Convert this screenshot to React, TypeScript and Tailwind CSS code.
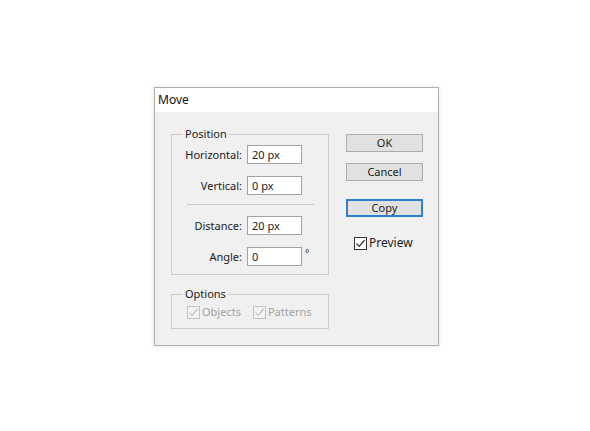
import React from "react";

const font = { fontFamily: '"Noto Sans", "Liberation Sans", sans-serif' };

function Field({ label, value, suffix }: { label: string; value: string; suffix?: string }) {
  return (
    <div className="flex items-center h-[19px]">
      <span className="w-[70px] text-right text-[11px] leading-[19px] text-[#1b1b1b]">{label}</span>
      <input
        readOnly
        value={value}
        className="ml-[5px] w-[55px] h-[19px] border border-[#a3a3a3] bg-white px-[4px] text-[11px] text-[#222] outline-none"
      />
      {suffix && <span className="ml-[3px] self-start text-[10px] leading-[12px] text-[#333]">{suffix}</span>}
    </div>
  );
}

function Check({ on, disabled }: { on: boolean; disabled?: boolean }) {
  const c = disabled ? "#c2c2c2" : "#333333";
  return (
    <svg width="13" height="13" viewBox="0 0 13 13" className="shrink-0">
      <rect x="0.5" y="0.5" width="12" height="12" fill={disabled ? "#f4f4f4" : "#ffffff"} stroke={c} />
      {on && <path d="M2.5 6.5 L5.2 9.3 L10.6 3" fill="none" stroke={c} strokeWidth="1.2" />}
    </svg>
  );
}

function Btn({ children, focused }: { children: React.ReactNode; focused?: boolean }) {
  return (
    <div
      className={
        "w-[77px] h-[18px] flex items-center justify-center bg-[#e1e1e1] text-[11px] text-[#1b1b1b] " +
        (focused ? "border-2 border-[#2f7fd0]" : "border border-[#adadad]")
      }
    >
      {children}
    </div>
  );
}

export default function App() {
  return (
    <div className="min-h-[431px] w-[590px] bg-white pt-[87px] pl-[154px]" style={font}>
      <div className="w-[285px] h-[259px] border border-[#b3aca6] bg-[#f0f0f0] shadow-[0_0_5px_rgba(0,0,0,0.12)] flex flex-col">
        {/* title bar */}
        <div className="h-[24px] bg-white flex items-center pl-[3px] text-[12px] text-[#111]">Move</div>

        <div className="flex pt-[14px] pl-[16px]">
          {/* left column */}
          <div className="w-[158px] flex flex-col">
            <fieldset className="border border-[#cdcdcd] pb-[8px]">
              <legend className="ml-[11px] px-[2px] text-[11px] leading-[16px] text-[#1b1b1b]">Position</legend>
              <div className="flex flex-col pt-[3px]">
                <Field label="Horizontal:" value="20 px" />
                <div className="mt-[12px]">
                  <Field label="Vertical:" value="0 px" />
                </div>
                <div className="mt-[9px] ml-[15px] w-[127px] h-px bg-[#c9c9c9]" />
                <div className="mt-[11px]">
                  <Field label="Distance:" value="20 px" />
                </div>
                <div className="mt-[12px]">
                  <Field label="Angle:" value="0" suffix="°" />
                </div>
              </div>
            </fieldset>

            <fieldset className="mt-[11px] border border-[#cdcdcd] pb-[8px]">
              <legend className="ml-[11px] px-[2px] text-[11px] leading-[16px] text-[#1b1b1b]">Options</legend>
              <div className="flex items-center h-[16px] mt-[2px] pl-[15px] text-[11px] text-[#a2a2a2]">
                <Check on disabled />
                <span className="ml-[2px]">Objects</span>
                <span className="ml-[12px] flex items-center">
                  <Check on disabled />
                  <span className="ml-[2px]">Patterns</span>
                </span>
              </div>
            </fieldset>
          </div>

          {/* right column */}
          <div className="ml-[17px] mt-[8px] flex flex-col">
            <Btn>OK</Btn>
            <div className="mt-[11px]">
              <Btn>Cancel</Btn>
            </div>
            <div className="mt-[18px]">
              <Btn focused>Copy</Btn>
            </div>
            <div className="mt-[17px] ml-[8px] flex items-center text-[12px] text-[#1b1b1b]">
              <Check on />
              <span className="ml-[2px]">Preview</span>
            </div>
          </div>
        </div>
      </div>
    </div>
  );
}
